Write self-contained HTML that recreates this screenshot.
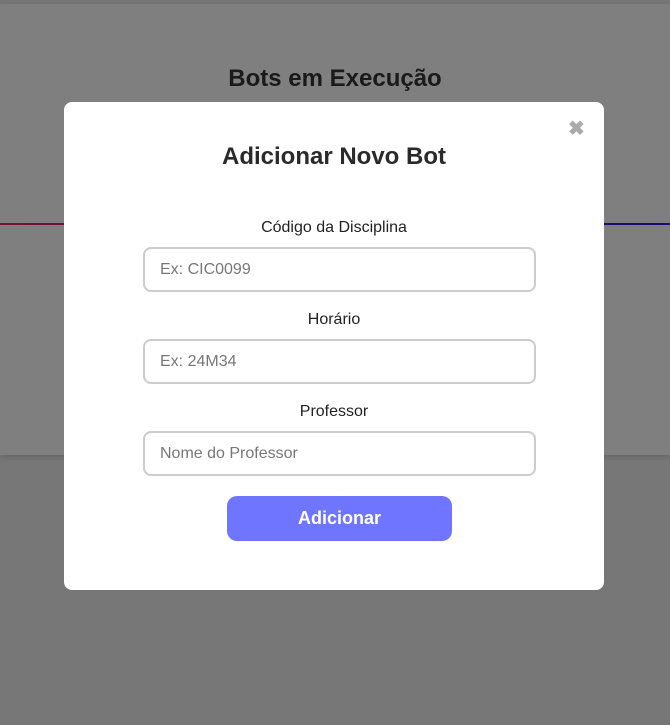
<!DOCTYPE html>
<html><head><meta charset="utf-8"><style>
*{box-sizing:border-box;margin:0;padding:0}
body{width:670px;height:725px;background:#777;font-family:"Liberation Sans",Arial,sans-serif;position:relative;overflow:hidden}
.panel{position:absolute;left:0;top:4px;width:670px;height:451px;background:#7f7f7f;box-shadow:0 2px 6px rgba(0,0,0,.15)}
.h{position:absolute;top:61px;left:0;width:670px;text-align:center;font-weight:bold;font-size:24px;color:#1a1a1a}
.line{position:absolute;top:223px;left:0;width:670px;height:2px;background:linear-gradient(90deg,#7a1030,#40106a,#1a0a7a)}
.modal{position:absolute;left:64px;top:102px;width:540px;height:488px;background:#fff;border-radius:8px}
.x{position:absolute;left:504px;top:14px;font-size:20px;font-weight:bold;color:#aaa}
.t{position:absolute;top:41px;left:0;width:540px;text-align:center;font-weight:bold;font-size:24px;color:#2a2a2a}
.lab{position:absolute;left:0;width:540px;text-align:center;font-size:16px;color:#222}
.in{position:absolute;left:79px;width:393px;height:45px;border:2px solid #ccc;border-radius:8px;font-size:16px;color:#777;padding:12px 0 0 15px}
.btn{position:absolute;left:163px;top:394px;width:225px;height:45px;background:#7075ff;border-radius:10px;color:#fff;font-weight:bold;font-size:18px;text-align:center;line-height:45px}
</style></head><body>
<div class="panel"><div class="h">Bots em Execução</div></div>
<div class="line"></div>
<div class="modal">
<div class="x">✖</div>
<div class="t">Adicionar Novo Bot</div>
<div class="lab" style="top:117px">Código da Disciplina</div>
<div class="in" style="top:145px">Ex: CIC0099</div>
<div class="lab" style="top:209px">Horário</div>
<div class="in" style="top:237px">Ex: 24M34</div>
<div class="lab" style="top:301px">Professor</div>
<div class="in" style="top:329px">Nome do Professor</div>
<div class="btn">Adicionar</div>
</div>
</body></html>
